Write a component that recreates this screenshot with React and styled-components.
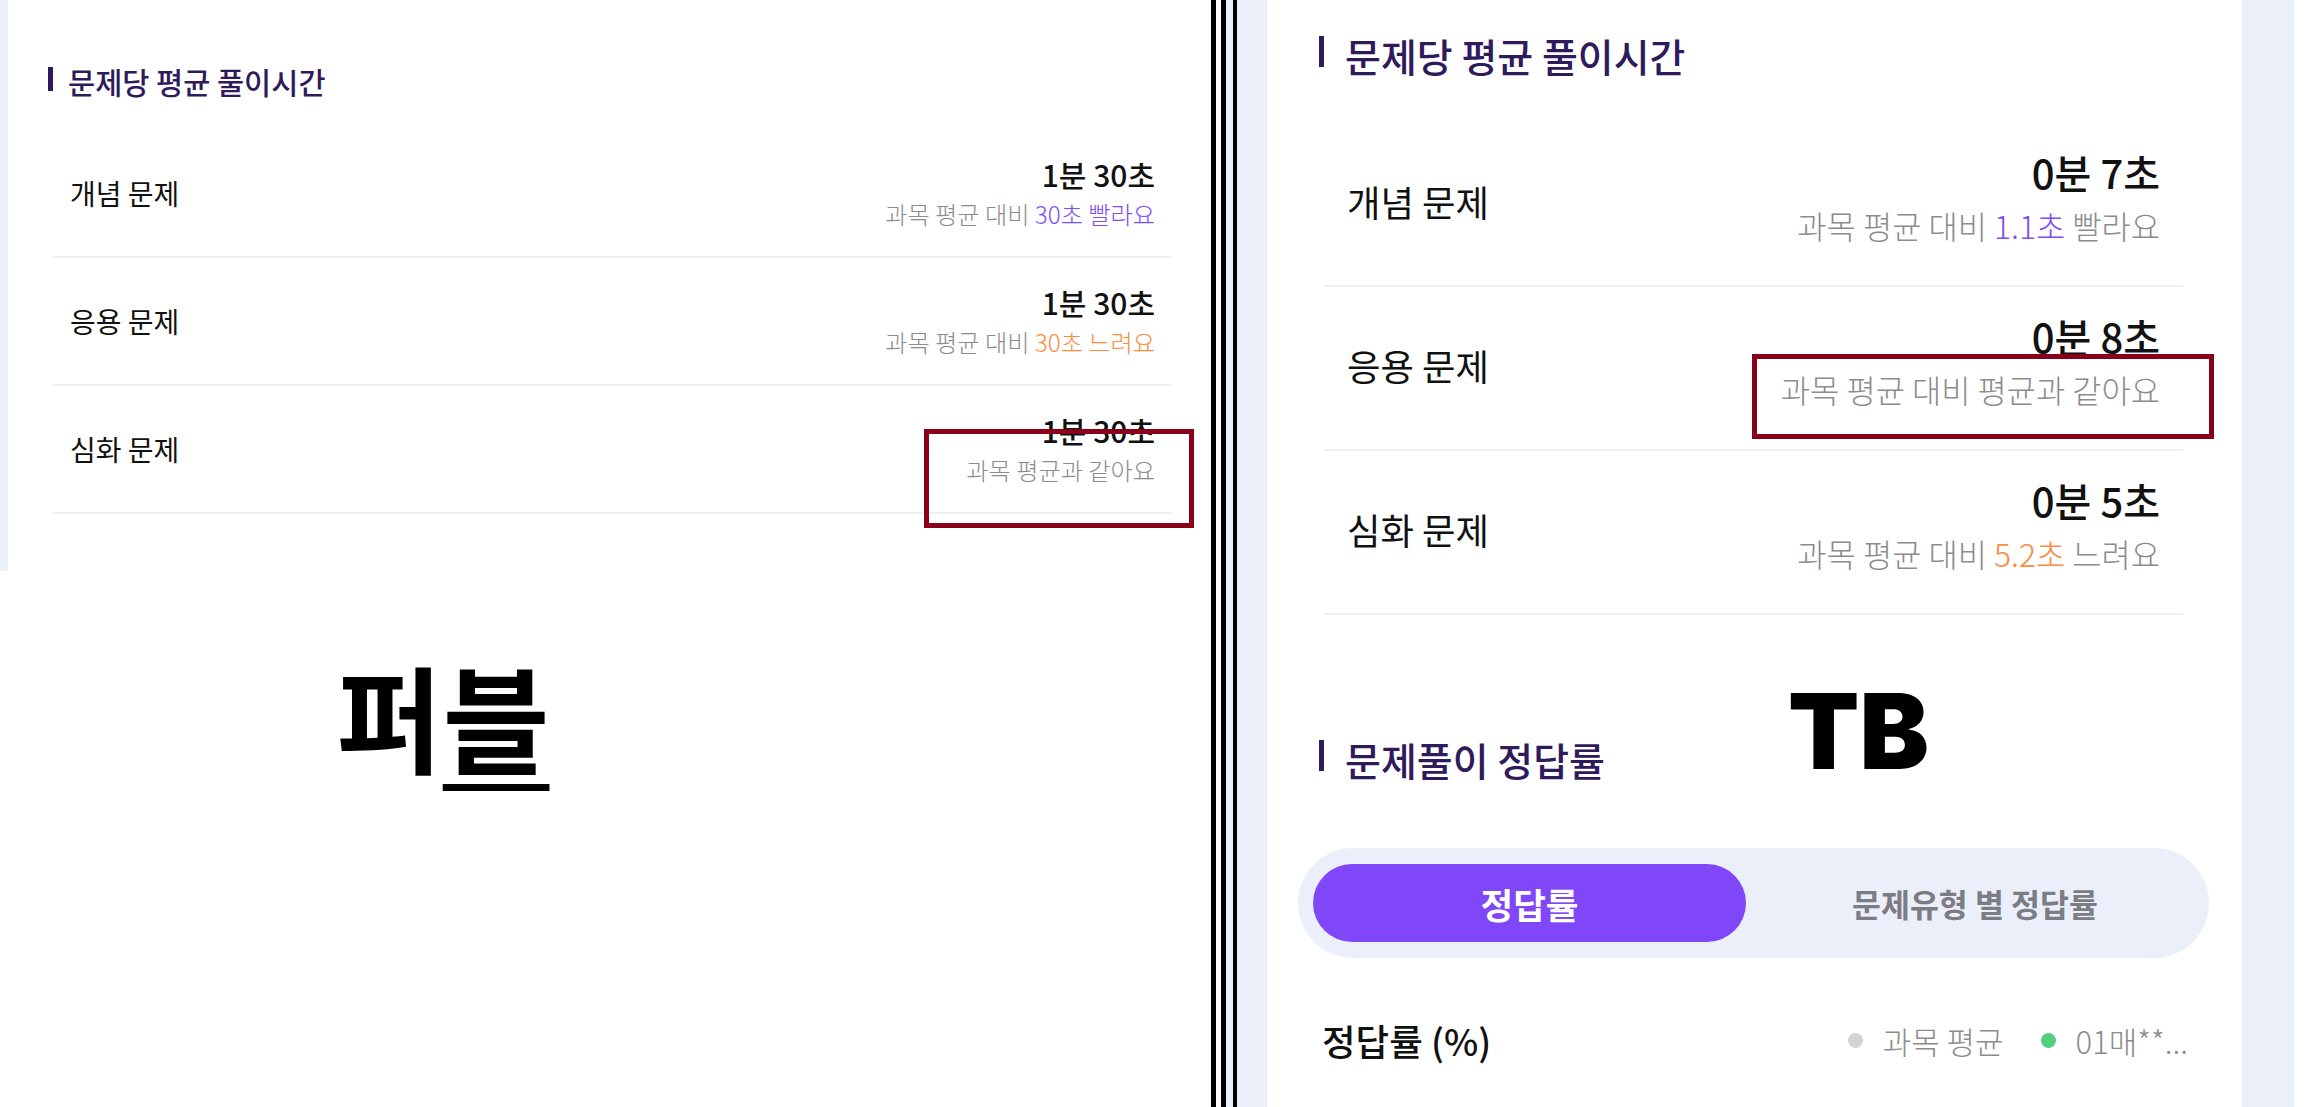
import React from "react";
import styled, { createGlobalStyle, css } from "styled-components";

const GlobalStyle = createGlobalStyle`
  * { box-sizing: border-box; }
  html, body { margin: 0; padding: 0; background: #ffffff; }
  body {
    font-family: "Noto Sans CJK KR", "Noto Sans", sans-serif;
    color: #111111;
  }
`;

const sizes = {
  sm: {
    cardPad: "64px 39px 0 40px",
    titleSize: 29.5,
    titleLine: 35,
    titleOffset: 0,
    barH: 24,
    barGap: 15,
    barLift: 6,
    listMargin: "31px 0 0 5px",
    rowH: 128,
    rowPad: "0 17px",
    labelSize: 28,
    labelLift: 0,
    valueSize: 30,
    valueLine: 34,
    subSize: 24.2,
    subLine: 30,
    subGap: 8,
    blockShift: 0,
  },
  lg: {
    cardPad: "32px 33px 0 31px",
    titleSize: 39,
    titleLine: 46,
    titleOffset: 21,
    barH: 31,
    barGap: 21,
    barLift: 8,
    listMargin: "45px 26px 0 27px",
    rowH: 164,
    rowPad: "0 23px 0 22px",
    labelSize: 36.4,
    labelLift: 6,
    valueSize: 40,
    valueLine: 46,
    subSize: 31.8,
    subLine: 38,
    subGap: 11,
    blockShift: 15,
  },
};

const sz = (key) => (p) => sizes[p.$size][key];

const Page = styled.div`
  display: flex;
  width: 2308px;
  height: 1107px;
  overflow: hidden;
  background: #ffffff;
`;

const LeftPane = styled.div`
  width: 1211px;
  flex-shrink: 0;
  display: flex;
  flex-direction: column;
`;

const ShotFrame = styled.div`
  height: 571px;
  background: #ebeffa;
  padding-left: 8px;
  display: flex;
`;

const Separator = styled.div`
  width: 26px;
  flex-shrink: 0;
  background: linear-gradient(
    to right,
    #000 0 5px,
    #fff 5px 10px,
    #000 10px 15px,
    #ebeffa 15px 22px,
    #000 22px 26px
  );
`;

const RightPane = styled.div`
  position: relative;
  width: 1057px;
  flex-shrink: 0;
  background: #ebeffa;
  padding: 0 52px 0 30px;
  display: flex;
`;

const Card = styled.div`
  position: relative;
  flex: 1;
  background: #ffffff;
  padding: ${sz("cardPad")};
  display: flex;
  flex-direction: column;
`;

const SectionTitle = styled.h3`
  margin: 0 0 0 ${sz("titleOffset")}px;
  display: flex;
  align-items: center;
  gap: ${sz("barGap")}px;
  font-size: ${sz("titleSize")}px;
  line-height: ${sz("titleLine")}px;
  font-weight: 500;
  color: #2f1b5b;
  white-space: nowrap;
  ${(p) => p.$top && css`margin-top: ${p.$top}px;`}

  &::before {
    content: "";
    flex-shrink: 0;
    width: 5px;
    height: ${sz("barH")}px;
    margin-bottom: ${sz("barLift")}px;
    background: #2f1b5b;
  }
`;

const TimeList = styled.ul`
  list-style: none;
  padding: 0;
  margin: ${sz("listMargin")};
`;

const TimeRow = styled.li`
  height: ${sz("rowH")}px;
  padding: ${sz("rowPad")};
  border-bottom: 2px solid #efefef;
  display: flex;
  align-items: center;
  justify-content: space-between;
`;

const RowLabel = styled.span`
  padding-bottom: ${sz("labelLift")}px;
  font-size: ${sz("labelSize")}px;
  font-weight: 400;
  color: #111111;
`;

const ValueBlock = styled.div`
  display: flex;
  flex-direction: column;
  align-items: flex-end;
  padding-bottom: ${sz("blockShift")}px;
`;

const Value = styled.span`
  font-size: ${sz("valueSize")}px;
  line-height: ${sz("valueLine")}px;
  font-weight: 500;
  color: #111111;
`;

const Compare = styled.span`
  margin-top: ${sz("subGap")}px;
  font-size: ${sz("subSize")}px;
  line-height: ${sz("subLine")}px;
  font-weight: 300;
  color: #8c8c8c;
  white-space: nowrap;
`;

const Diff = styled.span`
  color: ${(p) => (p.$tone === "slow" ? "#ff8a3d" : "#7b4ef5")};
`;

const Highlight = styled.div`
  position: absolute;
  left: ${(p) => p.$x}px;
  top: ${(p) => p.$y}px;
  width: ${(p) => p.$w}px;
  height: ${(p) => p.$h}px;
  border: 5px solid #8a0018;
  pointer-events: none;
`;

const Caption = styled.div`
  margin-top: 85px;
  padding-left: 336px;
  font-size: 116px;
  line-height: 116px;
  font-weight: 700;
  color: #000000;

  u {
    text-decoration-thickness: 7px;
    text-underline-offset: 19px;
  }
`;

const Stamp = styled.div`
  position: absolute;
  left: 551px;
  top: 679px;
  font-family: Inter, "Liberation Sans", sans-serif;
  font-size: 104px;
  line-height: 1;
  font-weight: 900;
  color: #000000;
`;

const Tabs = styled.div`
  margin-top: 66px;
  height: 110px;
  padding: 16px 15px;
  border-radius: 55px;
  background: #ebeffa;
  display: grid;
  grid-template-columns: 433fr 448fr;
`;

const Tab = styled.button`
  border: none;
  border-radius: 39px;
  font-family: inherit;
  font-weight: 700;
  cursor: pointer;
  white-space: nowrap;
  ${(p) =>
    p.$active
      ? css`
          background: #7f47f7;
          color: #ffffff;
          font-size: 35.5px;
        `
      : css`
          padding-left: 16px;
          background: transparent;
          color: #7c7c84;
          font-size: 31.5px;
        `}
`;

const ChartHead = styled.div`
  margin-top: 42px;
  height: 80px;
  padding: 0 21px 0 24px;
  display: flex;
  align-items: center;
  justify-content: space-between;
`;

const ChartTitle = styled.span`
  font-size: 36.5px;
  font-weight: 500;
  color: #111111;
`;

const Legend = styled.div`
  display: flex;
  align-items: center;
  gap: 37px;
`;

const LegendItem = styled.span`
  display: flex;
  align-items: center;
  gap: 20px;
  font-size: 31px;
  font-weight: 300;
  color: #8c8c8c;
  white-space: nowrap;

  &::before {
    content: "";
    width: 15px;
    height: 15px;
    border-radius: 50%;
    background: ${(p) => p.$dot};
  }
`;

const leftRows = [
  { label: "개념 문제", value: "1분 30초", pre: "과목 평균 대비 ", diff: "30초 빨라요", tone: "fast" },
  { label: "응용 문제", value: "1분 30초", pre: "과목 평균 대비 ", diff: "30초 느려요", tone: "slow" },
  { label: "심화 문제", value: "1분 30초", pre: "과목 평균과 같아요" },
];

const rightRows = [
  { label: "개념 문제", value: "0분 7초", pre: "과목 평균 대비 ", diff: "1.1초", tone: "fast", post: " 빨라요" },
  { label: "응용 문제", value: "0분 8초", pre: "과목 평균 대비 평균과 같아요" },
  { label: "심화 문제", value: "0분 5초", pre: "과목 평균 대비 ", diff: "5.2초", tone: "slow", post: " 느려요" },
];

const TimeTable = ({ size, rows }) => (
  <>
    <SectionTitle $size={size}>문제당 평균 풀이시간</SectionTitle>
    <TimeList $size={size}>
      {rows.map((r) => (
        <TimeRow key={r.label} $size={size}>
          <RowLabel $size={size}>{r.label}</RowLabel>
          <ValueBlock $size={size}>
            <Value $size={size}>{r.value}</Value>
            <Compare $size={size}>
              {r.pre}
              {r.diff && <Diff $tone={r.tone}>{r.diff}</Diff>}
              {r.post}
            </Compare>
          </ValueBlock>
        </TimeRow>
      ))}
    </TimeList>
  </>
);

const App = () => {
  return (
    <>
      <GlobalStyle />
      <Page>
        <LeftPane>
          <ShotFrame>
            <Card $size="sm">
              <TimeTable size="sm" rows={leftRows} />
              <Highlight $x={916} $y={429} $w={270} $h={99} />
            </Card>
          </ShotFrame>
          <Caption>
            퍼<u>블</u>
          </Caption>
        </LeftPane>

        <Separator />

        <RightPane>
          <Card $size="lg">
            <TimeTable size="lg" rows={rightRows} />
            <SectionTitle $size="lg" $top={121}>
              문제풀이 정답률
            </SectionTitle>
            <Tabs>
              <Tab $active>정답률</Tab>
              <Tab>문제유형 별 정답률</Tab>
            </Tabs>
            <ChartHead>
              <ChartTitle>정답률 (%)</ChartTitle>
              <Legend>
                <LegendItem $dot="#d3d3d3">과목 평균</LegendItem>
                <LegendItem $dot="#4fcf7f">01매**...</LegendItem>
              </Legend>
            </ChartHead>
          </Card>
          <Highlight $x={515} $y={354} $w={462} $h={85} />
          <Stamp>TB</Stamp>
        </RightPane>
      </Page>
    </>
  );
};

export default App;
